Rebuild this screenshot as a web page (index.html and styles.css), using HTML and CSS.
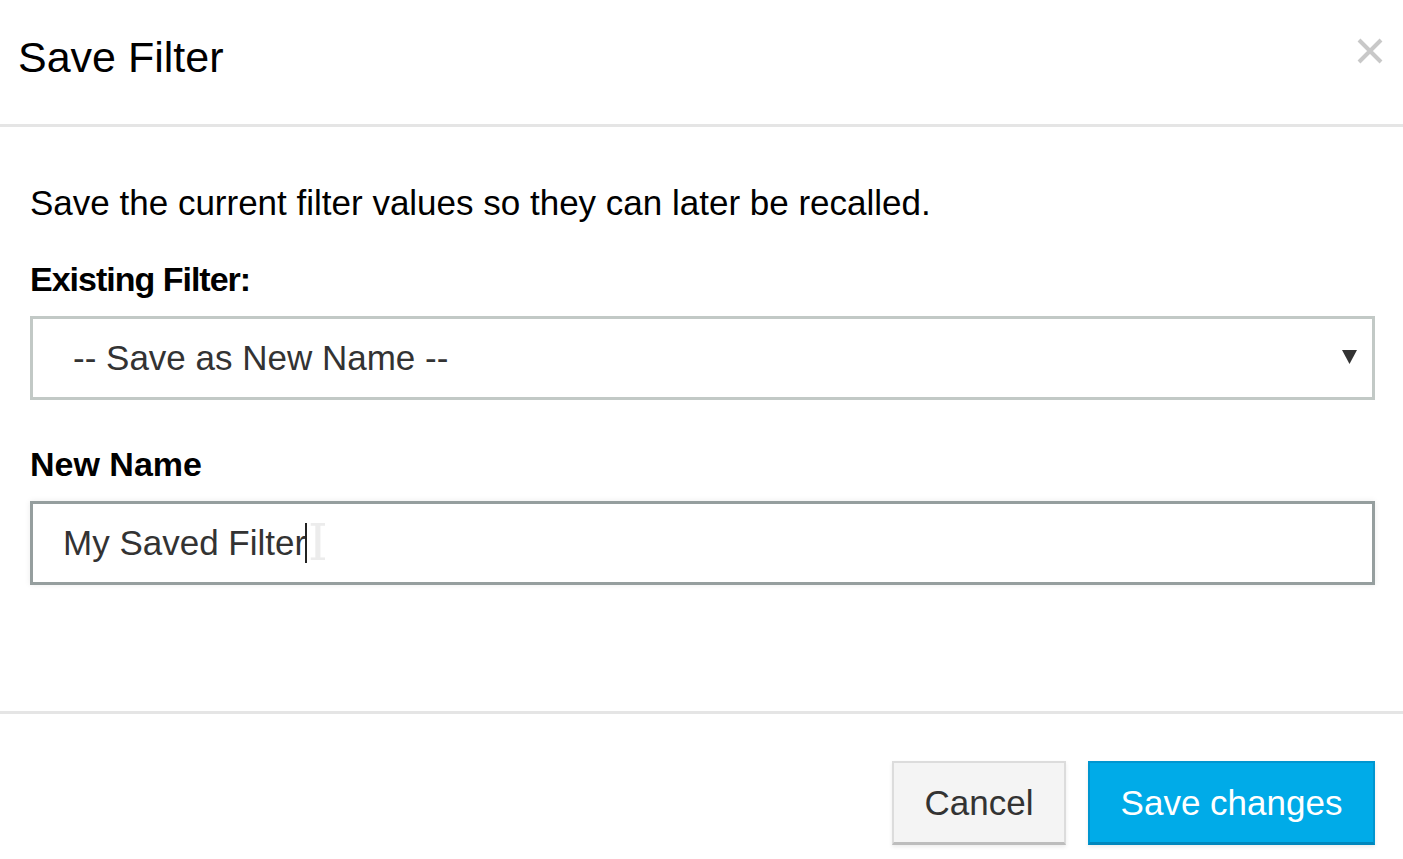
FILE: index.html
```html
<!DOCTYPE html>
<html lang="en">
<head>
<meta charset="utf-8">
<title>Save Filter</title>
<link rel="stylesheet" href="styles.css">
</head>
<body>
<div class="modal">
  <div class="modal-header">
    <h1 class="modal-title">Save Filter</h1>
    <button class="close" aria-label="Close">
      <svg width="26" height="26" viewBox="0 0 26 26"><path d="M2 2 L24 24 M24 2 L2 24" stroke="#c8c8c8" stroke-width="4" fill="none"/></svg>
    </button>
  </div>
  <div class="modal-body">
    <p class="intro">Save the current filter values so they can later be recalled.</p>
    <label class="field-label label-existing">Existing Filter:</label>
    <div class="control select">
      <span class="control-text">-- Save as New Name --</span>
      <svg class="arrow" width="15" height="14" viewBox="0 0 15 14"><path d="M0 0 H15 L7.5 14 Z" fill="#333"/></svg>
    </div>
    <label class="field-label label-second">New Name</label>
    <div class="control input">
      <span class="control-text">My Saved Filter</span><span class="caret"></span><span class="ibeam">I</span>
    </div>
  </div>
  <div class="modal-footer">
    <button class="btn btn-default">Cancel</button>
    <button class="btn btn-primary">Save changes</button>
  </div>
</div>
</body>
</html>
```

FILE: styles.css
```css
html, body {
  margin: 0;
  padding: 0;
  background: #fff;
}
body {
  font-family: "Liberation Sans", Arial, Helvetica, sans-serif;
  color: #000;
}
.modal {
  width: 1403px;
}
.modal-header {
  height: 127px;
  box-sizing: border-box;
  padding: 33px 20px 0 18px;
  border-bottom: 3px solid #e5e5e5;
  display: flex;
  justify-content: space-between;
  align-items: flex-start;
}
.modal-title {
  margin: 0;
  font-size: 43px;
  font-weight: normal;
  line-height: 48px;
}
.close {
  border: 0;
  background: none;
  padding: 0;
  margin-top: 5px;
  width: 26px;
  height: 26px;
  display: block;
}
.close svg { display: block; }
.modal-body {
  padding: 56px 28px 0 30px;
  box-sizing: border-box;
  height: 584px;
}
.intro {
  margin: 0;
  font-size: 35px;
  line-height: 40px;
}
.field-label {
  display: block;
  margin-top: 36px;
  font-size: 34px;
  font-weight: bold;
  line-height: 40px;
}
.label-existing {
  letter-spacing: -1px;
}
.label-second {
  margin-top: 44px;
  letter-spacing: 0;
}
.control {
  margin-top: 17px;
  height: 84px;
  box-sizing: border-box;
  display: flex;
  align-items: center;
  font-size: 35px;
  color: #333;
  position: relative;
}
.select {
  border: 3px solid #c2c9c6;
  padding: 0 15px 0 40px;
  justify-content: space-between;
}
.select .arrow {
  display: block;
  margin-top: -2px;
}
.input {
  border: 3px solid #959e9e;
  padding: 0 0 0 30px;
  box-shadow: 0 0 6px rgba(0, 0, 0, 0.08);
}
.caret {
  display: inline-block;
  width: 2px;
  height: 40px;
  background: #222;
  margin-left: -1px;
}
.ibeam {
  position: absolute;
  left: 275px;
  top: 11px;
  font-family: "DejaVu Serif", serif;
  font-size: 50px;
  line-height: 56px;
  color: #ececec;
  font-weight: normal;
}
.modal-footer {
  border-top: 3px solid #e5e5e5;
  padding: 47px 28px 0 0;
  height: 146px;
  box-sizing: border-box;
  display: flex;
  justify-content: flex-end;
  gap: 22px;
}
.btn {
  font-family: "Liberation Sans", Arial, Helvetica, sans-serif;
  font-size: 35px;
  height: 84px;
  box-sizing: border-box;
  padding: 0;
  white-space: nowrap;
  cursor: pointer;
  box-shadow: 0 2px 4px rgba(0, 0, 0, 0.08);
}
.btn-default {
  background: #f4f4f4;
  color: #333;
  border: 2px solid #dcdcdc;
  border-bottom: 3px solid #bdbdbd;
  width: 174px;
}
.btn-primary {
  background: #00abe8;
  color: #fff;
  border: 2px solid #0096d0;
  border-bottom: 3px solid #0087bd;
  width: 287px;
}
```
